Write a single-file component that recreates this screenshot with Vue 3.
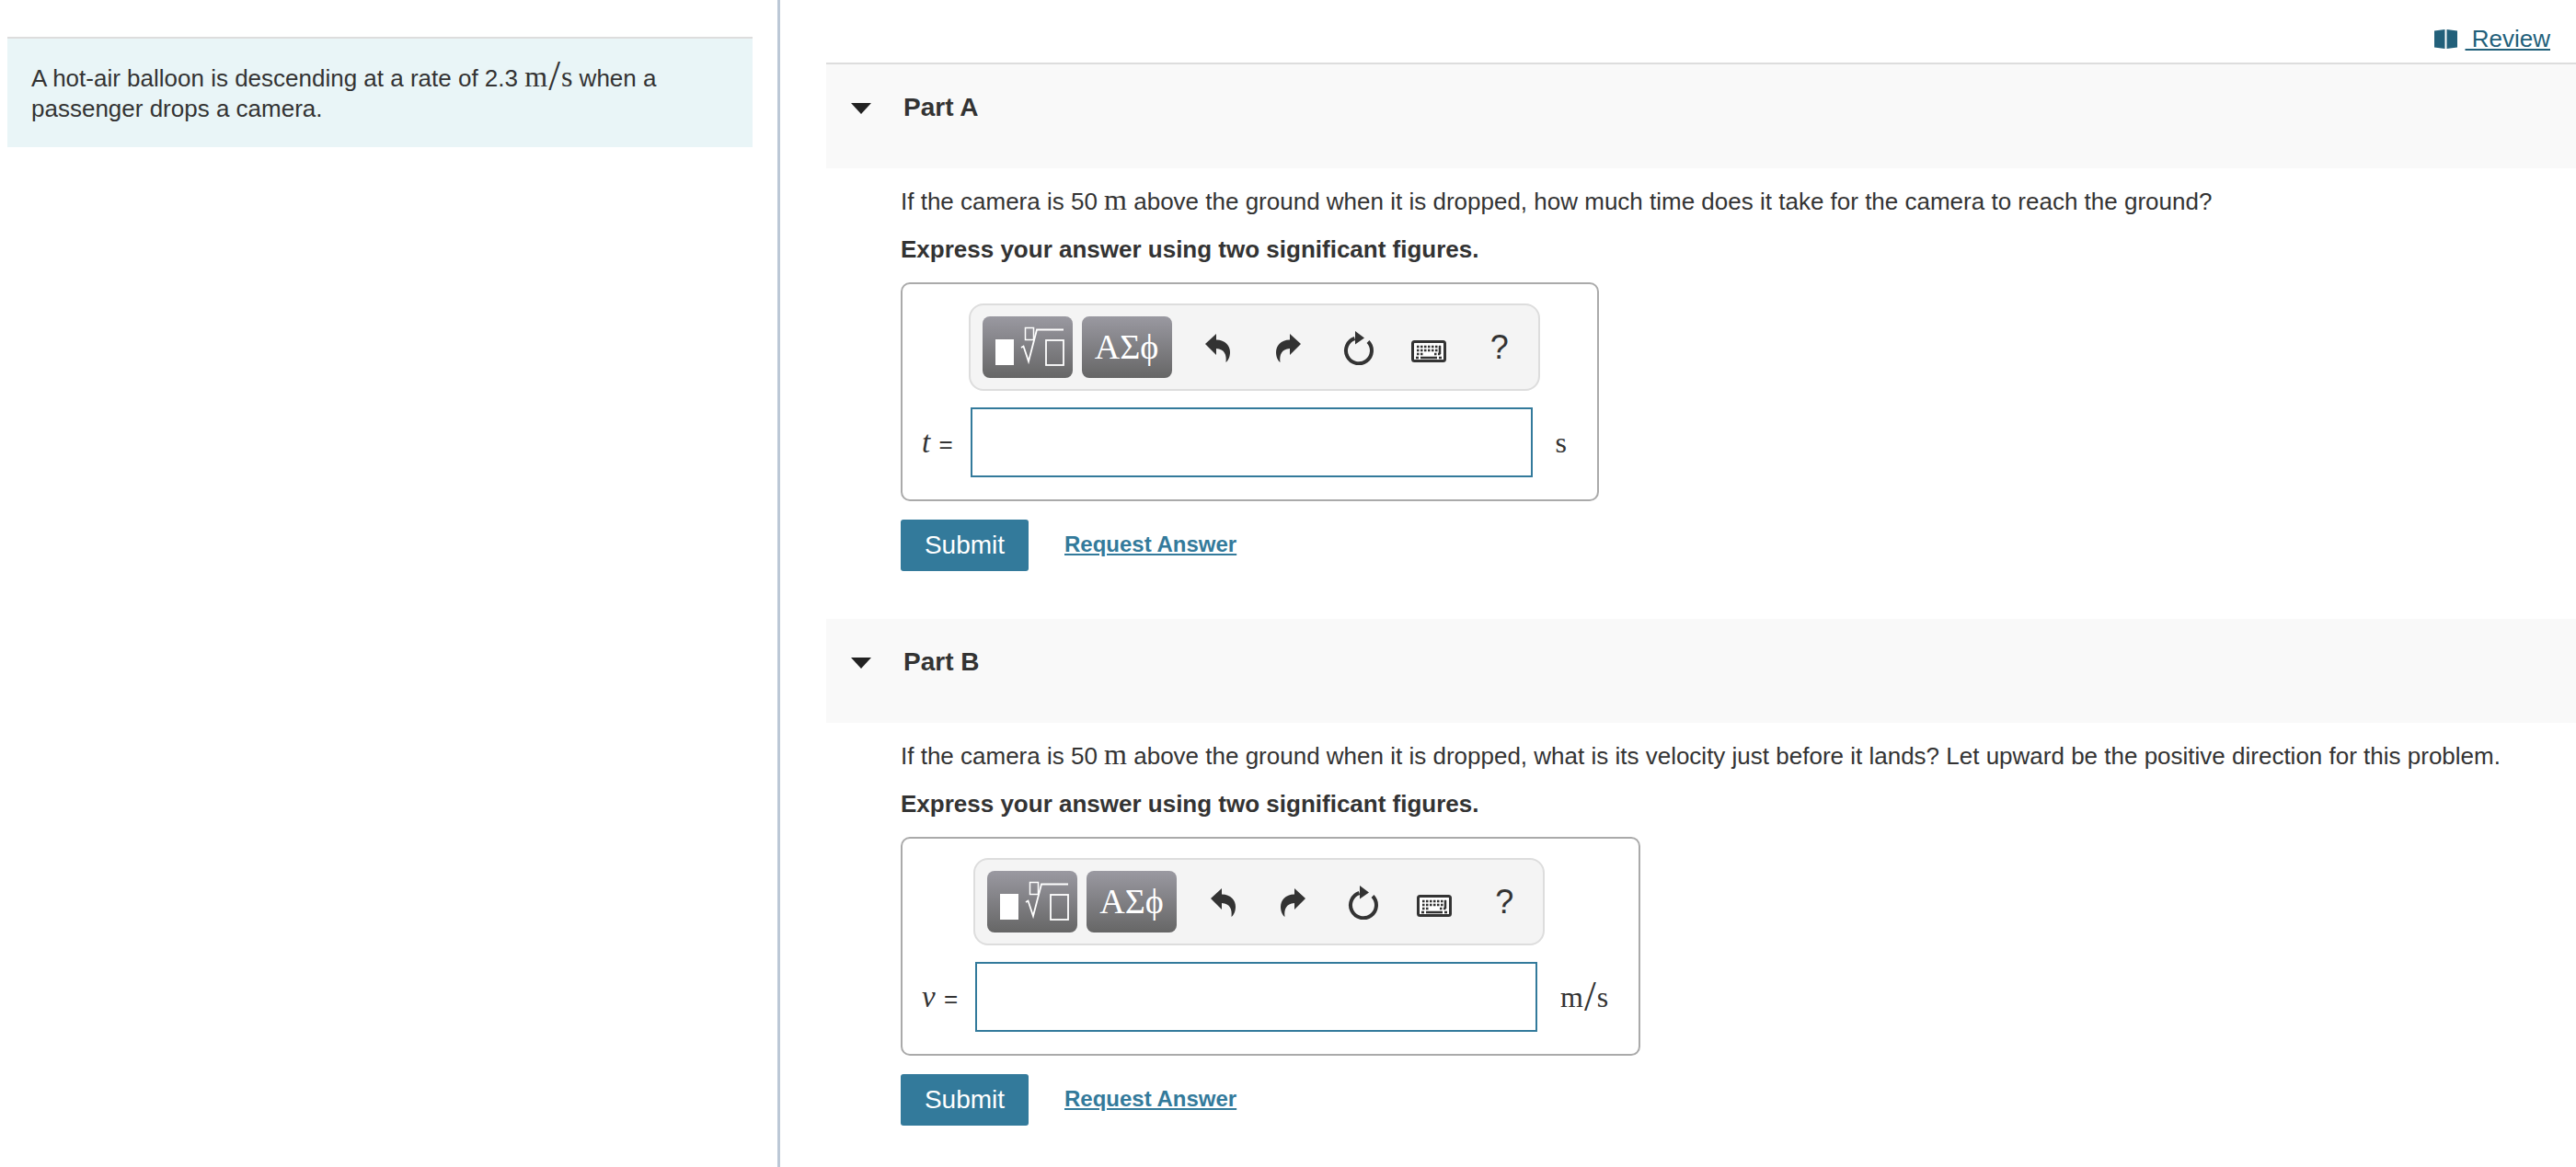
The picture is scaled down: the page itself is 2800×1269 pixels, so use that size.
<template>
  <div class="page">
    <aside class="side">
      <div class="intro">
        A hot-air balloon is descending at a rate of 2.3 <span class="unit-math">m<span class="slash">/</span>s</span> when a passenger drops a camera.
      </div>
    </aside>

    <main class="main">
      <div class="review-row">
        <a class="review" href="#">
          <svg class="book" viewBox="0 0 25 21" width="25" height="21">
            <path d="M0 1.500L11.500 0v21L0 19.500zM13.500 0L25 1.500v18L13.500 21z" fill="#22607a" />
          </svg>
          <span class="review-text">&nbsp;Review</span>
        </a>
      </div>

      <section v-for="part in parts" :key="part.name" class="part">
        <div class="part-head">
          <span class="caret"></span>
          <span class="part-name">{{ part.name }}</span>
        </div>
        <div class="part-body">
          <p class="question">
            If the camera is 50 <span class="unit-math">m</span> above the ground when it is dropped, {{ part.question }}
          </p>
          <p class="express">Express your answer using two significant figures.</p>

          <div class="frame">
            <div class="toolbar">
              <button class="tool-btn">
                <svg viewBox="0 0 98 67" width="98" height="67">
                  <rect x="14" y="25" width="20" height="28" fill="#fff" />
                  <rect x="46.500" y="12.500" width="9" height="13" fill="none" stroke="#fff" stroke-width="1.500" />
                  <path d="M42 34l2.500-1.500L50 49l9-34.500h29" fill="none" stroke="#fff" stroke-width="1.800" />
                  <rect x="69" y="26" width="19" height="27" fill="none" stroke="#fff" stroke-width="1.800" />
                </svg>
              </button>
              <button class="tool-btn greek">ΑΣϕ</button>
              <span class="tool-icon">
                <svg viewBox="0 0 27 32" width="27" height="32">
                  <path d="M0 12L12 1v6.500C22 7.500 27 14 27 21c0 5-2 9-4.500 11 1-8-1.500-14.500-10.500-15v7z" fill="#333" />
                </svg>
              </span>
              <span class="tool-icon">
                <svg viewBox="0 0 27 32" width="27" height="32">
                  <path d="M27 12L15 1v6.500C5 7.500 0 14 0 21c0 5 2 9 4.500 11-1-8 1.500-14.500 10.500-15v7z" fill="#333" />
                </svg>
              </span>
              <span class="tool-icon">
                <svg viewBox="0 0 34 38" width="34" height="38">
                  <path d="M27 12.500A14 14 0 1 1 12.500 9" fill="none" stroke="#333" stroke-width="4" />
                  <path d="M13 1l10 7.500-10 7z" fill="#333" />
                </svg>
              </span>
              <span class="tool-icon kbd-icon">
                <svg viewBox="0 0 38 24" width="38" height="24">
                  <rect x="1.500" y="1.500" width="35" height="21" rx="2" fill="#fff" stroke="#333" stroke-width="3" />
                  <path d="M6 7h26M6 11h23M6 15h7M25 15h7" fill="none" stroke="#333" stroke-width="2.500" stroke-dasharray="2.500 1.500" />
                  <path d="M31 6v9M10 19h18M5 19h3M30 19h3" fill="none" stroke="#333" stroke-width="2.500" />
                </svg>
              </span>
              <span class="tool-icon help">?</span>
            </div>

            <span class="var"><i>{{ part.symbol }}</i> =</span>
            <input class="answer" type="text" />
            <span class="unit-math answer-unit">
              <template v-if="part.unit === 'm/s'">m<span class="slash">/</span>s</template>
              <template v-else>{{ part.unit }}</template>
            </span>
          </div>

          <div class="actions">
            <button class="submit">Submit</button>
            <a class="request" href="#">Request Answer</a>
          </div>
        </div>
      </section>
    </main>
  </div>
</template>

<script setup>
const parts = [
  {
    name: 'Part A',
    question: 'how much time does it take for the camera to reach the ground?',
    symbol: 't',
    unit: 's',
  },
  {
    name: 'Part B',
    question: 'what is its velocity just before it lands? Let upward be the positive direction for this problem.',
    symbol: 'v',
    unit: 'm/s',
  },
]
</script>

<style>
html, body {
  margin: 0;
  background: #fff;
  overflow: hidden;
}
</style>

<style scoped>
.page {
  display: flex;
  height: 1269px;
  overflow: hidden;
  font-family: "Liberation Sans", Arial, sans-serif;
  font-size: 26px;
  color: #333;
}
.side {
  flex: none;
  box-sizing: border-box;
  width: 848px;
  padding: 40px 0 0 8px;
  border-right: 3px solid #bcc8d6;
}
.intro {
  width: 810px;
  box-sizing: border-box;
  height: 120px;
  padding: 27px 26px 0;
  background: #e9f5f7;
  border-top: 2px solid #dddddd;
  line-height: 33px;
}
.main {
  flex: 1;
  min-width: 0;
  padding-left: 50px;
}
.review-row {
  height: 68px;
  box-sizing: border-box;
  padding: 26px 28px 0 0;
  display: flex;
  justify-content: flex-end;
}
.review {
  display: flex;
  align-items: center;
  height: 32px;
  font-size: 26px;
  color: #22607a;
  text-decoration: none;
}
.review-text {
  text-decoration: underline;
}
.book {
  margin-right: 9px;
}
.part {
  padding-bottom: 52px;
}
.part-head {
  height: 115px;
  box-sizing: border-box;
  border-top: 2px solid #dddddd;
  background: #f9f9f9;
  display: flex;
  align-items: flex-start;
  padding: 31px 0 0 27px;
}
.part:nth-of-type(n+2) .part-head {
  height: 113px;
  border-top: 0;
}
.caret {
  width: 0;
  height: 0;
  margin-top: 11px;
  border-left: 11px solid transparent;
  border-right: 11px solid transparent;
  border-top: 12px solid #222;
}
.part-name {
  margin-left: 35px;
  font-size: 28px;
  font-weight: bold;
  line-height: 32px;
}
.part-body {
  padding: 20px 0 0 81px;
}
.question {
  margin: 0;
  line-height: 32px;
  white-space: nowrap;
}
.express {
  margin: 20px 0 0;
  font-weight: bold;
  line-height: 32px;
}
.unit-math {
  font-family: "Liberation Serif", serif;
  font-size: 32px;
  line-height: 0;
}
.slash {
  font-size: 46px;
  line-height: 0;
  margin: 0 1px;
  vertical-align: -4px;
}
.frame {
  display: inline-grid;
  grid-template-columns: auto 611px auto;
  align-items: center;
  box-sizing: border-box;
  margin-top: 20px;
  padding: 21px 33px 24px 21px;
  border: 2px solid #aaaaaa;
  border-radius: 10px;
  vertical-align: top;
}
.toolbar {
  grid-column: 2 / 4;
  display: flex;
  align-items: center;
  box-sizing: border-box;
  width: 621px;
  height: 95px;
  margin-left: -2px;
  padding: 0 13px;
  border: 2px solid #dddddd;
  border-radius: 16px;
  background: #f4f4f4;
}
.tool-btn {
  flex: none;
  width: 98px;
  height: 67px;
  padding: 0;
  margin-right: 10px;
  border: 0;
  border-radius: 8px;
  background: linear-gradient(#9a99a1, #666666);
  color: #fff;
  font-family: "Liberation Serif", serif;
  font-size: 38px;
  display: flex;
  align-items: center;
  justify-content: center;
}
.tool-icon {
  flex: none;
  width: 76.500px;
  display: flex;
  justify-content: center;
}
.tool-btn.greek {
  margin-right: 12px;
  padding-bottom: 2px;
}
.kbd-icon {
  padding-top: 8px;
}
.help {
  font-size: 36px;
  color: #333;
  line-height: 40px;
}
.var {
  grid-column: 1;
  margin-right: 19px;
  margin-top: 18px;
  white-space: nowrap;
  word-spacing: 2px;
}
.var i {
  font-family: "Liberation Serif", serif;
  font-size: 33px;
}
.answer {
  grid-column: 2;
  width: 611px;
  height: 76px;
  margin-top: 18px;
  box-sizing: border-box;
  border: 2px solid #337a9b;
  outline: none;
  background: #fff;
}
.answer-unit {
  grid-column: 3;
  margin-top: 18px;
  margin-left: 25px;
  line-height: 40px;
}
.actions {
  display: flex;
  align-items: center;
  margin-top: 20px;
}
.submit {
  width: 139px;
  height: 56px;
  padding: 0;
  border: 0;
  border-radius: 3px;
  background: #337a9b;
  color: #fff;
  font-family: "Liberation Sans", Arial, sans-serif;
  font-size: 28px;
}
.request {
  margin-left: 39px;
  margin-top: -3px;
  color: #337a9b;
  font-size: 24px;
  font-weight: bold;
}
</style>
